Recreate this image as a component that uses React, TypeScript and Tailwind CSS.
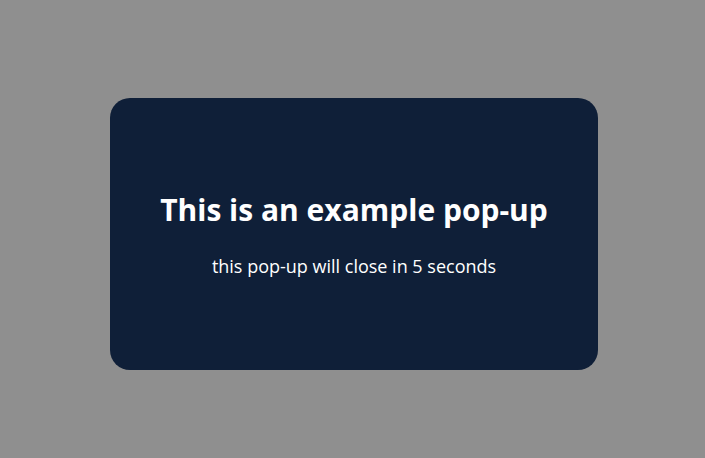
import React from 'react';

const App: React.FC = () => {
  return (
    <div
      className="w-[705px] h-[458px] bg-[#8f8f8f] pl-[110px] pt-[98px]"
      style={{ fontFamily: '"Open Sans", "Noto Sans", sans-serif' }}
    >
      <div className="w-[488px] h-[272px] bg-[#0f1f38] rounded-[20px] flex flex-col items-center justify-center text-white">
        <h1 className="text-[30px] font-bold leading-[40px]">This is an example pop-up</h1>
        <p className="text-[18px] leading-[26px] mt-[23px]">this pop-up will close in 5 seconds</p>
      </div>
    </div>
  );
};

export default App;
